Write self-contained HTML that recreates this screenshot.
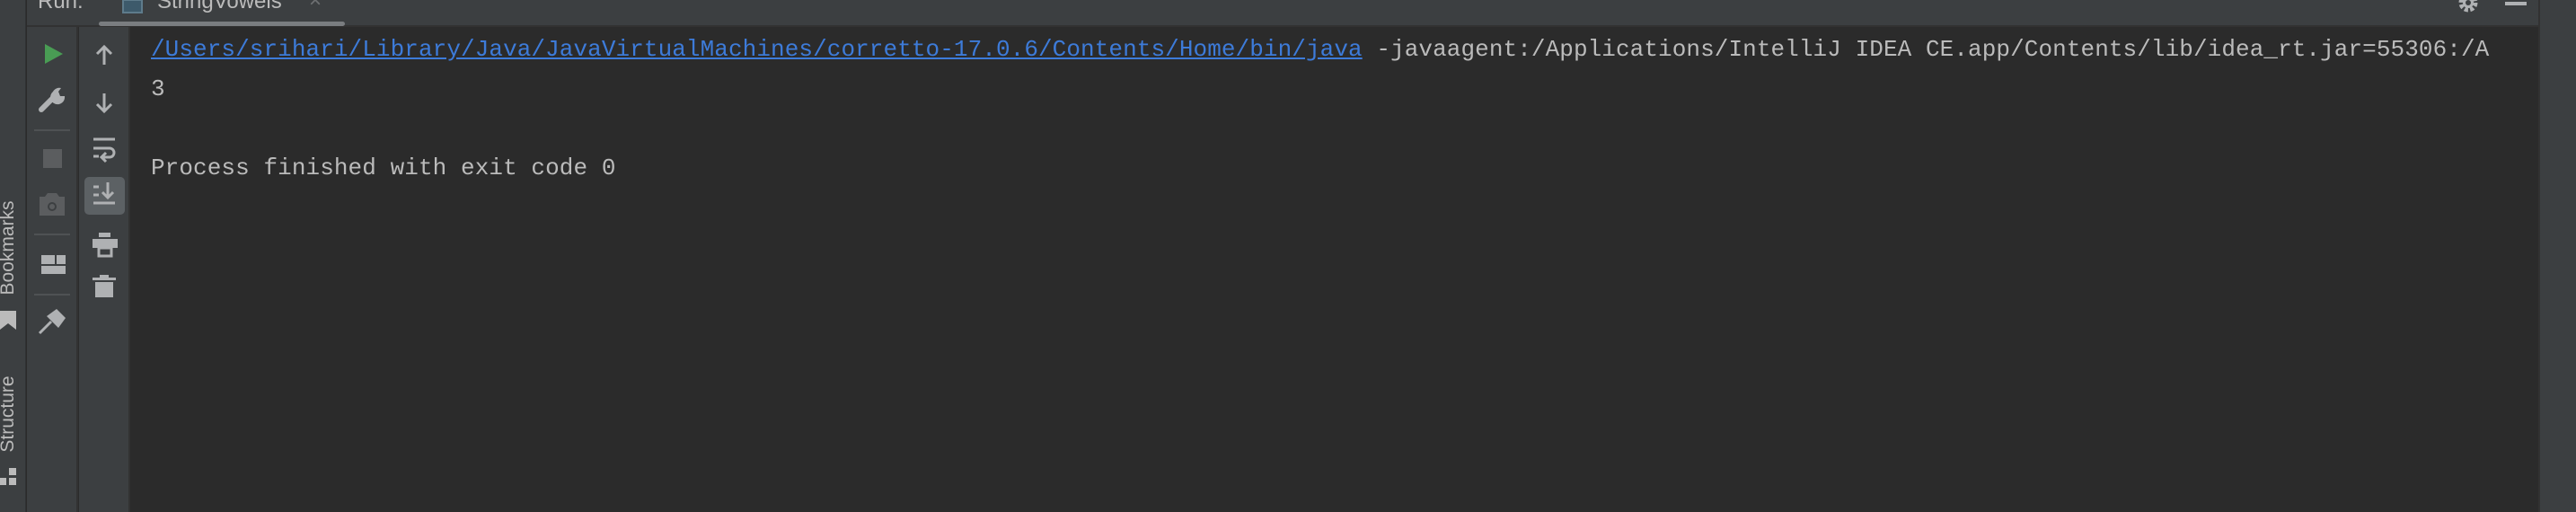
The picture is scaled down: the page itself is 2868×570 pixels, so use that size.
<!DOCTYPE html>
<html><head><meta charset="utf-8"><style>
*{margin:0;padding:0;box-sizing:border-box}
body{width:2868px;height:570px;background:#2b2b2b;overflow:hidden;position:relative;font-family:"Liberation Sans",sans-serif}
.abs{position:absolute}
.mono{font-family:"Liberation Mono",monospace;font-size:26px;letter-spacing:0.08px;color:#bbbbbb;white-space:pre;position:absolute;left:168px}
</style></head><body>
<!-- left strip -->
<div class="abs" style="left:0;top:0;width:29px;height:570px;background:#3c3f41;border-right:1px solid #2f3133"></div>
<div class="abs" style="left:0;top:0;width:30px;height:570px;">
 <div class="abs" style="left:-51px;top:265px;width:120px;height:22px;transform:rotate(-90deg);color:#bbbbbb;font-size:21px;text-align:center;line-height:22px">Bookmarks</div>
 <svg class="abs" style="left:0;top:346px" width="20" height="22"><path d="M0 0H18V21L9 14L0 21Z" fill="#bbbbbb"/></svg>
 <div class="abs" style="left:-41px;top:450px;width:100px;height:22px;transform:rotate(-90deg);color:#bbbbbb;font-size:21px;text-align:center;line-height:22px">Structure</div>
 <svg class="abs" style="left:0;top:521px" width="20" height="20"><rect x="10" y="0" width="8" height="8" fill="#bbbbbb"/><rect x="0" y="11" width="7" height="8" fill="#bbbbbb"/><rect x="10" y="11" width="8" height="8" fill="#bbbbbb"/></svg>
</div>
<!-- header -->
<div class="abs" style="left:30px;top:0;width:2797px;height:30px;background:#3c3f41;border-bottom:2px solid #323232"></div>
<div class="abs" style="left:42px;top:-12px;color:#bbbbbb;font-size:24px">Run:</div>
<svg class="abs" style="left:136px;top:0" width="26" height="16"><rect x="1" y="0" width="21" height="14" fill="#3d5a6b" stroke="#5e7b8b" stroke-width="2"/></svg>
<div class="abs" style="left:175px;top:-12px;color:#bbbbbb;font-size:24px">StringVowels</div>
<div class="abs" style="left:344px;top:-13px;color:#6e7072;font-size:24px">×</div>
<div class="abs" style="left:110px;top:24px;width:274px;height:5px;background:#7a7d80;border-radius:3px"></div>
<svg class="abs" style="left:2735px;top:0" width="26" height="16"><circle cx="13" cy="3" r="8" fill="none" stroke="#afb1b3" stroke-width="5" stroke-dasharray="4 2.3"/><circle cx="13" cy="3" r="6" fill="#afb1b3"/><circle cx="13" cy="3" r="3" fill="#3c3f41"/></svg>
<div class="abs" style="left:2789px;top:2px;width:24px;height:4px;background:#afb1b3"></div>
<!-- right strip -->
<div class="abs" style="left:2826px;top:0;width:42px;height:570px;background:#3c3f41;border-left:2px solid #323232"></div>
<!-- toolbars -->
<div class="abs" style="left:30px;top:30px;width:57px;height:540px;background:#3c3f41;border-right:2px solid #323232"></div>
<div class="abs" style="left:88px;top:30px;width:57px;height:540px;background:#3c3f41;border-right:2px solid #323232"></div>
<svg class="abs" style="left:30px;top:30px" width="115" height="540">
 <!-- col1 -->
 <path d="M20 19L40 30L20 41Z" fill="#499c54"/>
 <path d="M16 92L33 75" stroke="#afb1b3" stroke-width="6" stroke-linecap="round"/>
 <path d="M29 72a8 8 0 1 0 13 5l-5 0l-2-5l3-4a8 8 0 0 0-9 4z" fill="#afb1b3"/>
 <rect x="8" y="114" width="40" height="2" fill="#4f5254"/>
 <rect x="18" y="136" width="21" height="21" fill="#5b5d5f"/>
 <path d="M14 189h6l3-4h10l3 4h6v21h-28z" fill="#5b5d5f"/><circle cx="28" cy="200" r="5" fill="#3c3f41"/><circle cx="28" cy="200" r="3" fill="#5b5d5f"/>
 <rect x="8" y="230" width="40" height="2" fill="#4f5254"/>
 <rect x="16" y="254" width="15" height="10" fill="#afb1b3"/><rect x="33" y="254" width="10" height="10" fill="#afb1b3"/><rect x="16" y="266" width="27" height="9" fill="#afb1b3"/>
 <rect x="8" y="297" width="40" height="2" fill="#4f5254"/>
 <path d="M14 341L27 328" stroke="#afb1b3" stroke-width="3"/>
 <path d="M22 322L33 314L43 324L35 335Z" fill="#afb1b3"/>
 <!-- col2 -->
 <path d="M86 42V22M78 30L86 22L94 30" stroke="#afb1b3" stroke-width="3" fill="none"/>
 <path d="M86 74V94M78 86L86 94L94 86" stroke="#afb1b3" stroke-width="3" fill="none"/>
 <path d="M74 125H98M74 135H92a5 5 0 0 1 0 10H84M88 140L83 145L88 150M74 144H80" stroke="#afb1b3" stroke-width="3" fill="none"/>
 <rect x="64" y="167" width="45" height="42" rx="5" fill="#5c6164"/>
 <path d="M74 178H80M74 187H80M74 196H98M90 173V190M84 184L90 190L96 184" stroke="#afb1b3" stroke-width="3" fill="none"/>
 <rect x="80" y="229" width="13" height="5" fill="#afb1b3"/><rect x="73" y="236" width="28" height="10" fill="#afb1b3"/><rect x="80" y="246" width="14" height="9" fill="none" stroke="#afb1b3" stroke-width="3"/>
 <rect x="73" y="279" width="26" height="3" fill="#afb1b3"/><rect x="81" y="276" width="10" height="3" fill="#afb1b3"/><rect x="76" y="284" width="20" height="17" fill="#afb1b3"/>
</svg>
<!-- console -->
<div class="mono" style="top:40px"><span style="color:#3d7bd9;text-decoration:underline">/Users/srihari/Library/Java/JavaVirtualMachines/corretto-17.0.6/Contents/Home/bin/java</span> -javaagent:/Applications/IntelliJ IDEA CE.app/Contents/lib/idea_rt.jar=55306:/A</div>
<div class="mono" style="top:84px">3</div>
<div class="mono" style="top:172px">Process finished with exit code 0</div>
</body></html>
